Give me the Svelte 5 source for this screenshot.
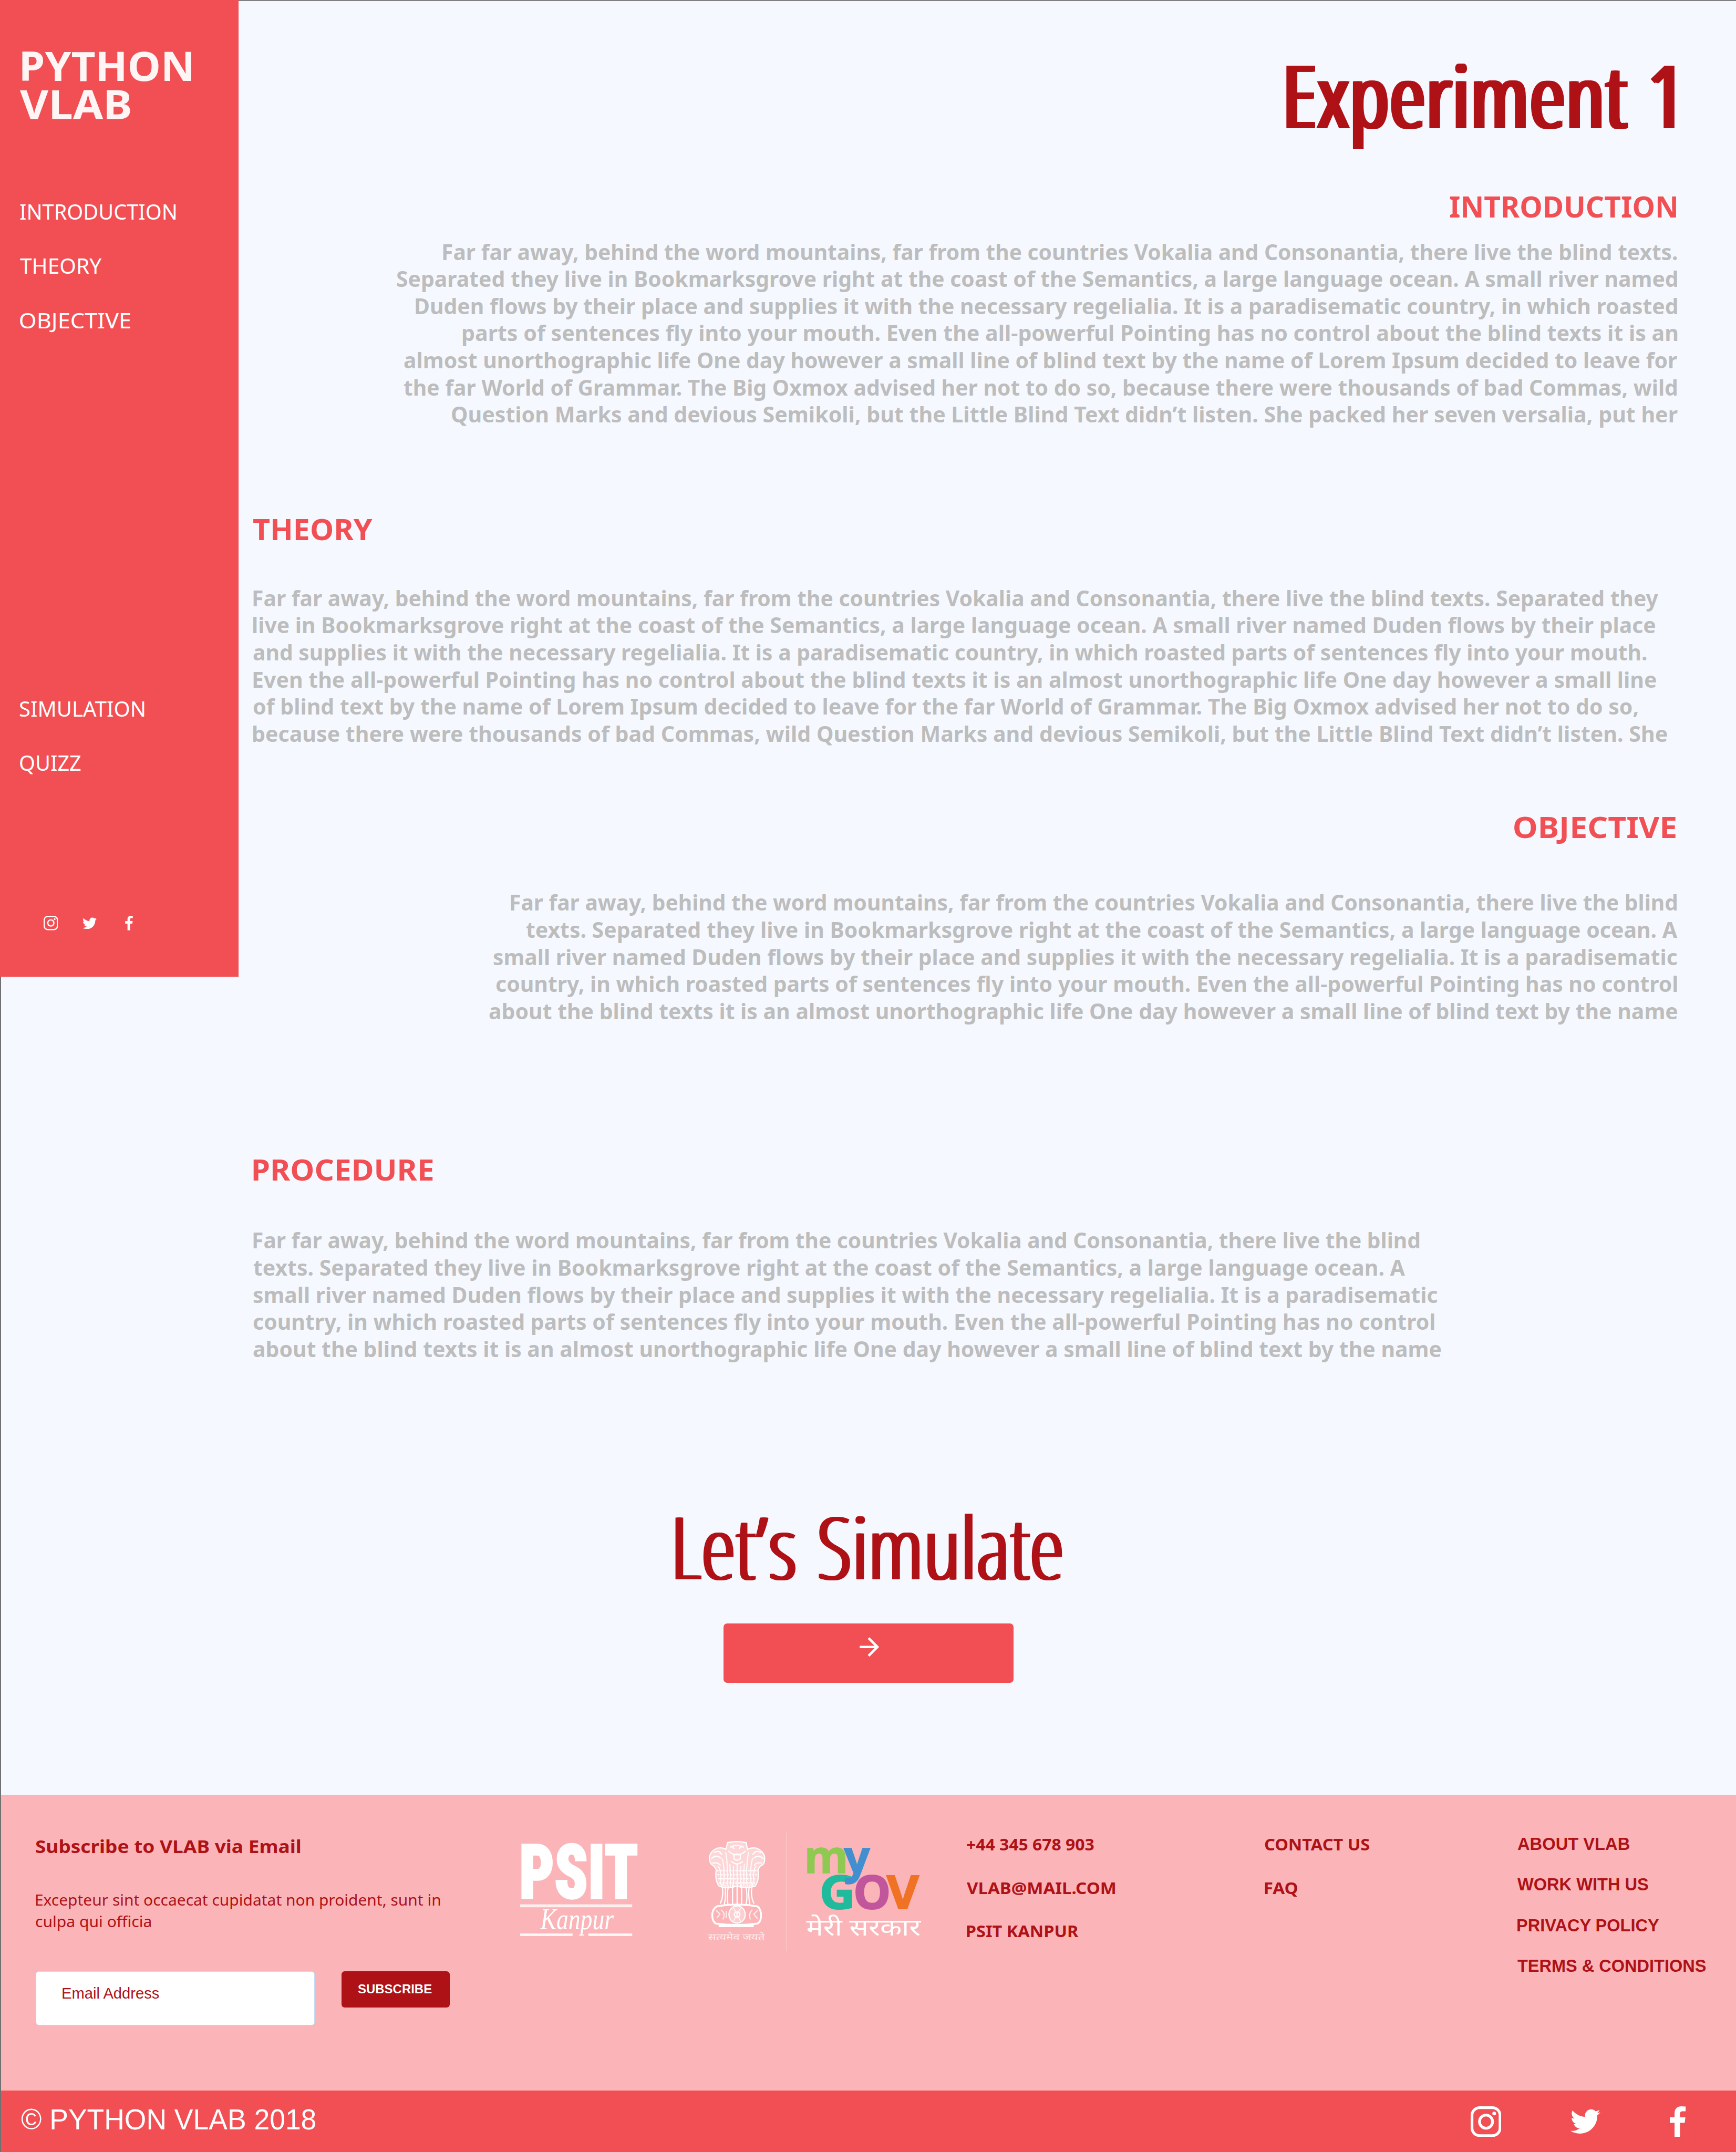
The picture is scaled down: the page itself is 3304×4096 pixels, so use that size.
<script>
  // 1rem = 100 design units; every measure below is in design units / 100.
  const unit = 100;

  // Stretches a single line of text so that its ink is exactly `width` units wide.
  function fit(node, width) {
    const rem = parseFloat(getComputedStyle(document.documentElement).fontSize);
    const style = getComputedStyle(node);
    const ctx = document.createElement('canvas').getContext('2d');
    ctx.font = `${style.fontWeight} ${style.fontSize} ${style.fontFamily}`;
    ctx.wordSpacing = style.wordSpacing;
    if (node.classList.contains('display')) ctx.fontStretch = 'condensed';
    const m = ctx.measureText(node.textContent);
    const ink = m.actualBoundingBoxLeft + m.actualBoundingBoxRight;
    const scale = ((width / unit) * rem) / ink;
    node.style.width = `${width / unit}rem`;
    node.style.transform = `translateX(${m.actualBoundingBoxLeft * scale}px) scaleX(${scale})`;
  }

  const pages = [
    { text: 'INTRODUCTION', w: 345 },
    { text: 'THEORY', w: 181 },
    { text: 'OBJECTIVE', w: 244 }
  ];
  const tools = [
    { text: 'SIMULATION', w: 275.4 },
    { text: 'QUIZZ', w: 135 }
  ];

  const sections = [
    {
      id: 'introduction', title: 'INTRODUCTION', w: 501, right: true,
      lines: [
        ['Far far away, behind the word mountains, far from the countries Vokalia and Consonantia, there live the blind texts.', 2730],
        ['Separated they live in Bookmarksgrove right at the coast of the Semantics, a large language ocean. A small river named', 2833],
        ['Duden flows by their place and supplies it with the necessary regelialia. It is a paradisematic country, in which roasted', 2791],
        ['parts of sentences fly into your mouth. Even the all-powerful Pointing has no control about the blind texts it is an', 2686],
        ['almost unorthographic life One day however a small line of blind text by the name of Lorem Ipsum decided to leave for', 2816],
        ['the far World of Grammar. The Big Oxmox advised her not to do so, because there were thousands of bad Commas, wild', 2817],
        ['Question Marks and devious Semikoli, but the Little Blind Text didn’t listen. She packed her seven versalia, put her', 2711]
      ]
    },
    {
      id: 'theory', title: 'THEORY', w: 264, right: false,
      lines: [
        ['Far far away, behind the word mountains, far from the countries Vokalia and Consonantia, there live the blind texts. Separated they', 3108],
        ['live in Bookmarksgrove right at the coast of the Semantics, a large language ocean. A small river named Duden flows by their place', 3101],
        ['and supplies it with the necessary regelialia. It is a paradisematic country, in which roasted parts of sentences fly into your mouth.', 3082],
        ['Even the all-powerful Pointing has no control about the blind texts it is an almost unorthographic life One day however a small line', 3103],
        ['of blind text by the name of Lorem Ipsum decided to leave for the far World of Grammar. The Big Oxmox advised her not to do so,', 3063],
        ['because there were thousands of bad Commas, wild Question Marks and devious Semikoli, but the Little Blind Text didn’t listen. She', 3127]
      ]
    },
    {
      id: 'objective', title: 'OBJECTIVE', w: 357, right: true,
      lines: [
        ['Far far away, behind the word mountains, far from the countries Vokalia and Consonantia, there live the blind', 2580],
        ['texts. Separated they live in Bookmarksgrove right at the coast of the Semantics, a large language ocean. A', 2547],
        ['small river named Duden flows by their place and supplies it with the necessary regelialia. It is a paradisematic', 2619],
        ['country, in which roasted parts of sentences fly into your mouth. Even the all-powerful Pointing has no control', 2613],
        ['about the blind texts it is an almost unorthographic life One day however a small line of blind text by the name', 2628]
      ]
    },
    {
      id: 'procedure', title: 'PROCEDURE', w: 397, right: false,
      lines: [
        ['Far far away, behind the word mountains, far from the countries Vokalia and Consonantia, there live the blind', 2580],
        ['texts. Separated they live in Bookmarksgrove right at the coast of the Semantics, a large language ocean. A', 2548],
        ['small river named Duden flows by their place and supplies it with the necessary regelialia. It is a paradisematic', 2620],
        ['country, in which roasted parts of sentences fly into your mouth. Even the all-powerful Pointing has no control', 2613],
        ['about the blind texts it is an almost unorthographic life One day however a small line of blind text by the name', 2627]
      ]
    }
  ];

  const contact = [
    ['+44 345 678 903', 282],
    ['VLAB@MAIL.COM', 328],
    ['PSIT KANPUR', 247]
  ];
  const help = [
    ['CONTACT US', 232],
    ['FAQ', 73]
  ];
  const legal = [
    ['ABOUT VLAB', 248],
    ['WORK WITH US', 289],
    ['PRIVACY POLICY', 314],
    ['TERMS & CONDITIONS', 416.5]
  ];
</script>

{#snippet socials()}
  <svg class="ig" viewBox="0 0 68 68">
    <rect x="3" y="3" width="62" height="62" rx="17" fill="none" stroke="#fff" stroke-width="6" />
    <circle cx="34" cy="34" r="14.5" fill="none" stroke="#fff" stroke-width="6" />
    <circle cx="52" cy="16" r="4.1" fill="#fff" />
  </svg>
  <svg class="tw" viewBox="0 48 512 416">
    <path fill="#fff" d="M459.37 151.716c.325 4.548.325 9.097.325 13.645 0 138.72-105.583 298.558-298.558 298.558-59.452 0-114.68-17.219-161.137-47.106 8.447.974 16.568 1.299 25.34 1.299 49.055 0 94.213-16.568 130.274-44.832-46.132-.975-84.792-31.188-98.112-72.772 6.498.974 12.995 1.624 19.818 1.624 9.421 0 18.843-1.3 27.614-3.573-48.081-9.747-84.143-51.98-84.143-102.985v-1.299c13.969 7.797 30.214 12.67 47.431 13.319-28.264-18.843-46.781-51.005-46.781-87.391 0-19.492 5.197-37.36 14.294-52.954 51.655 63.675 129.3 105.258 216.365 109.807-1.624-7.797-2.599-15.918-2.599-24.04 0-57.828 46.782-104.934 104.934-104.934 30.213 0 57.502 12.67 76.67 33.137 23.715-4.548 46.456-13.32 66.599-25.34-7.798 24.366-24.366 44.833-46.132 57.827 21.117-2.273 41.584-8.122 60.426-16.243-14.292 20.791-32.161 39.308-52.628 54.253z" />
  </svg>
  <svg class="fb" viewBox="0 0 35 68">
    <path fill="#fff" d="M35 .6V11H28.5C23.5 11 22.5 13.5 22.5 17V24.5H34.5L33 36.5H22.5V67.5H10.5V36.5H0V24.5H10.5V15.5C10.5 5.5 16.5 0 26 0Z" />
  </svg>
{/snippet}

<div class="page">
  <div class="top">
    <aside class="sidebar">
      <div class="brand">
        <div class="line first" use:fit={374}>PYTHON</div>
        <div class="line" use:fit={244}>VLAB</div>
      </div>
      <nav class="nav">
        {#each pages as item}<a class="line" use:fit={item.w}>{item.text}</a>{/each}
      </nav>
      <nav class="nav tools">
        {#each tools as item}<a class="line" use:fit={item.w}>{item.text}</a>{/each}
      </nav>
      <div class="social">{@render socials()}</div>
    </aside>

    <main class="content">
      <h1 class="line display" use:fit={850}>Experiment 1</h1>
      {#each sections as s}
        <section class="{s.id}" class:right={s.right}>
          <h2 class="line" use:fit={s.w}>{s.title}</h2>
          <div class="copy">
            {#each s.lines as [text, w]}<span class="line" use:fit={w}>{text}</span>{/each}
          </div>
        </section>
      {/each}
    </main>
  </div>

  <section class="cta">
    <div class="line display" use:fit={848}>Let’s Simulate</div>
    <button class="go" aria-label="Start simulation">
      <svg viewBox="0 0 24 24"><path fill="#fff" d="M12 4l-1.41 1.41L16.17 11H4v2h12.17l-5.58 5.59L12 20l8-8z" /></svg>
    </button>
  </section>

  <footer class="footer">
    <div class="subscribe">
      <h3 class="line" use:fit={585}>Subscribe to VLAB via Email</h3>
      <div class="desc">
        <span class="line" use:fit={895}>Excepteur sint occaecat cupidatat non proident, sunt in</span>
        <span class="line" use:fit={255}>culpa qui officia</span>
      </div>
      <div class="form">
        <div class="field"><span class="line" use:fit={215}>Email Address</span></div>
        <button class="submit"><span class="line" use:fit={164}>SUBSCRIBE</span></button>
      </div>
    </div>

    <svg class="logos" viewBox="0 0 1000 320">
      <g fill="#fff">
        <text class="psit" x="49" y="179.3" textLength="263" lengthAdjust="spacingAndGlyphs">PSIT</text>
        <rect x="51" y="192.5" width="248" height="6.5" opacity=".78" />
        <text class="kanpur" x="96" y="247" textLength="162" lengthAdjust="spacingAndGlyphs">Kanpur</text>
        <rect x="51" y="257" width="116" height="5.5" opacity=".9" />
        <rect x="202" y="257" width="97" height="5.5" opacity=".9" />
      </g>

      <!-- lion capital -->
      <g fill="none" stroke="#fff" stroke-width="2.6" stroke-linecap="round">
        <path fill="#fff" fill-opacity=".45" d="M510 56q20-5 41 0l3 15q8-5 19-3q20 8 19 25q0 12-10 15l-5 8q4 22-6 36q-20 8-41 0q-21 8-39 0q-10-14-6-36l-5-8q-9-4-10-15q-1-18 18-25q12-2 18 3z" />
        <path d="M516 66q15-8 29 0M519 64l5 5M541 64l-5 5M512 75q18 16 37 0M524 84q7-6 14 0v8q-7 6-14 0zM519 98q12 10 24 0" />
        <path d="M480 78q10-7 17 4M474 92q9-11 21-2M477 101q12-2 17 5M583 78q-10-7-17 4M589 92q-9-11-21-2M586 101q-12-2-17 5" />
        <path opacity=".85" d="M489 108q8 8 5 40M498 92q6 18 3 58M506 78q6 35 3 74M515 104q2 24 1 48M523 108v46M531 104v50M539 108v46M547 104q-2 24-1 48M556 78q-6 35-3 74M565 92q-6 18-3 58M573 108q-8 8-5 40" />
        <path stroke-dasharray="3 4" d="M486 118h90M488 127h86M490 136h82M492 145h78" />
        <path d="M497 148q6 24-3 42M504 150q3 20-1 42M512 152q-5 20-1 42M521 150v44M531 154v40M541 150v44M550 152q5 20 1 42M558 150q-3 20 1 42M565 148q-6 24 3 42" />
        <path stroke-width="4" d="M486 197q45-8 90 0q8 6 8 20q0 14-8 18q-45 6-92 0q-8-5-8-18q0-14 10-20z" />
        <ellipse cx="531" cy="215" rx="18" ry="19" fill="#fff" fill-opacity=".35" />
        <circle cx="531" cy="215" r="6" />
        <path opacity=".75" d="M485 206l8 8-6 8M496 205q10 8 4 20M507 208v14M576 206l-8 8 8 10M564 205q-8 8-4 20M524 202l14 26M538 202l-14 26" />
        <path stroke-width="6" d="M493 240h72" />
      </g>
      <g fill="#fff">
        <text class="motto" x="467" y="272.5" textLength="125" lengthAdjust="spacingAndGlyphs">सत्यमेव जयते</text>
        <rect x="639" y="34" width="2.5" height="262" opacity=".16" />
        <text class="hindi" x="684" y="261" textLength="253" lengthAdjust="spacingAndGlyphs">मेरी सरकार</text>
      </g>
      <text class="my" x="679" y="123" fill="#8fc951" stroke="#8fc951" textLength="98" lengthAdjust="spacingAndGlyphs">m</text>
      <text class="gov" x="713" y="202.5" fill="#1fbb9c" stroke="#1fbb9c" textLength="80" lengthAdjust="spacingAndGlyphs">G</text>
      <text class="gov" x="788" y="202.5" fill="#c2569d" stroke="#c2569d" textLength="83" lengthAdjust="spacingAndGlyphs">O</text>
      <text class="gov" x="862" y="202.5" fill="#f07225" stroke="#f07225" textLength="71" lengthAdjust="spacingAndGlyphs">V</text>
      <text class="my" x="767" y="123" fill="#418fcf" stroke="#418fcf" textLength="58" lengthAdjust="spacingAndGlyphs">y</text>
    </svg>

    <div class="links">
      {#each contact as [text, w]}<span class="line" use:fit={w}>{text}</span>{/each}
    </div>
    <div class="links">
      {#each help as [text, w]}<span class="line" use:fit={w}>{text}</span>{/each}
    </div>
    <div class="links legal">
      {#each legal as [text, w]}<span class="line" use:fit={w}>{text}</span>{/each}
    </div>
  </footer>

  <div class="bar">
    <span class="line" use:fit={651}>© PYTHON VLAB 2018</span>
    <div class="social">{@render socials()}</div>
  </div>
</div>

<style>
  :global(html) { font-size: 86.0417px; }
  :global(body) { margin: 0; overflow: hidden; }

  .page {
    width: 38.4rem;
    height: 47.604rem;
    overflow: hidden;
    background:
      linear-gradient(#707070, #707070) 0 0 / 2px 100% no-repeat,
      linear-gradient(#808080, #808080) 0 0 / 100% 2px no-repeat,
      #f5f9ff;
    font-family: "Noto Sans", "Open Sans", sans-serif;
  }
  .line {
    display: block;
    margin: 0;
    white-space: nowrap;
    transform-origin: 0 0;
    text-align: left;
  }
  svg { display: block; }
  button { font: inherit; border: 0; padding: 0; }

  .top { display: flex; height: 31.5rem; }

  .sidebar {
    box-sizing: border-box;
    width: 5.28rem;
    height: 21.6rem;
    padding: 1.026rem 0 0 .44rem;
    background: #f14f53;
    color: #fff;
  }
  .brand { font-size: .9rem; line-height: .84rem; font-weight: 700; color: #fff5f5; }
  .brand .first { margin-left: .045rem; }
  .nav { margin-top: 1.383rem; font-size: .46rem; line-height: 1.203rem; }
  .nav.tools { margin-top: 7.382rem; line-height: 1.2rem; }
  .social { display: flex; align-items: center; }
  .sidebar .social { height: .32rem; margin: 2.78rem 0 0 .52rem; }
  .sidebar .ig { width: .32rem; height: .32rem; }
  .sidebar .tw { width: .315rem; height: .265rem; margin-left: .55rem; }
  .sidebar .fb { width: .175rem; height: .325rem; margin-left: .62rem; }

  .content { flex: 1; padding: 1.088rem 1.3rem 0 .32rem; }
  .display {
    font-family: "Open Sans", "Noto Sans", sans-serif;
    font-stretch: condensed;
    line-height: 2rem;
    color: #ae1116;
  }
  h1.display {
    margin: 0 .15rem 0 auto;
    font-size: 1.93rem;
    font-weight: 500;
    word-spacing: .04em;
    text-shadow: .03rem 0, .06rem 0, .09rem 0;
  }
  section.right { display: flex; flex-direction: column; align-items: flex-end; }
  h2 { font-size: .64rem; line-height: .8rem; font-weight: 700; color: #f14f53; }
  .right h2 { margin-right: .03rem; }
  .copy { font-size: .48rem; line-height: .6rem; font-weight: 700; color: #bdbdbd; }
  .right .copy { display: flex; flex-direction: column; align-items: flex-end; }
  .introduction { margin-top: 1.081rem; }
  .introduction .copy { margin-top: .302rem; }
  .theory { margin-top: 1.839rem; }
  .theory .copy { margin-top: .824rem; }
  .objective { margin-top: 1.363rem; }
  .objective .copy { margin-top: .974rem; }
  .procedure { margin-top: 2.805rem; }
  .procedure .copy { margin-top: .868rem; }

  .cta {
    display: flex;
    flex-direction: column;
    align-items: center;
    height: 8.2rem;
    box-sizing: border-box;
    padding-top: 1.694rem;
  }
  .cta .display {
    margin-right: .05rem;
    font-size: 1.915rem;
    font-weight: 300;
    word-spacing: .05em;
    text-shadow: .025rem 0, .05rem 0, .08rem 0;
  }
  .go {
    display: flex;
    justify-content: center;
    align-items: flex-start;
    box-sizing: border-box;
    width: 6.41rem;
    height: 1.314rem;
    margin: .719rem 0 0 .02rem;
    padding: .198rem 0 0 .05rem;
    border-radius: .08rem;
    background: #f14f53;
  }
  .go svg { width: .645rem; height: .645rem; }

  .footer {
    display: grid;
    grid-template-columns: 10.21rem 10.38rem 6.6rem 5.58rem 1fr;
    align-items: start;
    box-sizing: border-box;
    height: 6.54rem;
    margin-left: 2px;
    padding-left: .767rem;
    background: #fbb5b8;
    color: #ae1116;
  }
  .subscribe { padding-top: .885rem; }
  h3 { font-size: .4rem; line-height: .5rem; font-weight: 700; }
  .desc { margin-top: .708rem; font-size: .33rem; line-height: .48rem; }
  .form { display: flex; align-items: flex-start; gap: .59rem; margin-top: .857rem; font-family: "Liberation Sans", Arial, sans-serif; }
  .field {
    box-sizing: border-box;
    width: 6.17rem;
    height: 1.19rem;
    padding: .277rem 0 0 .58rem;
    border: .02rem solid #bfe0fa;
    border-radius: .07rem;
    background: #fff;
    font-size: .348rem;
    line-height: .4rem;
  }
  .submit {
    box-sizing: border-box;
    width: 2.4rem;
    height: .8rem;
    padding: 0 0 .02rem .37rem;
    border-radius: .07rem;
    background: #ae1116;
    color: #fff;
    font-size: .28rem;
    line-height: .32rem;
    font-weight: 700;
  }
  .logos { width: 10rem; height: 3.2rem; margin-top: .5rem; }
  .psit { font: 900 165px "Roboto Condensed", Roboto, sans-serif; stroke: #fff; stroke-width: 4; }
  .kanpur { font: italic 66px "Liberation Serif", serif; }
  .motto { font: 21px "Noto Sans Devanagari", "Noto Sans", sans-serif; opacity: .75; }
  .hindi { font: 52px "Noto Sans Devanagari", "Noto Sans", sans-serif; }
  .my, .gov { font: 700 100px "Open Sans", sans-serif; stroke-width: 1.5; }
  .gov { font-size: 103px; stroke-width: 2.5; }

  .links { padding-top: .627rem; font-size: .35rem; line-height: .962rem; font-weight: 700; }
  .legal { padding-top: .637rem; font-family: "Liberation Sans", Arial, sans-serif; font-size: .385rem; line-height: .9rem; }

  .bar {
    display: flex;
    justify-content: space-between;
    align-items: flex-start;
    height: 1.4rem;
    margin-left: 2px;
    padding: 0 1.11rem 0 .447rem;
    background: #f14f53;
    color: #fff;
    font-family: "Liberation Sans", Arial, sans-serif;
    font-size: .655rem;
    line-height: 1.27rem;
  }
  .bar .social { margin-top: .35rem; height: .68rem; }
  .bar .ig { width: .68rem; height: .68rem; }
  .bar .tw { width: .66rem; height: .555rem; margin-left: 1.53rem; }
  .bar .fb { width: .35rem; height: .68rem; margin-left: 1.54rem; }
</style>
